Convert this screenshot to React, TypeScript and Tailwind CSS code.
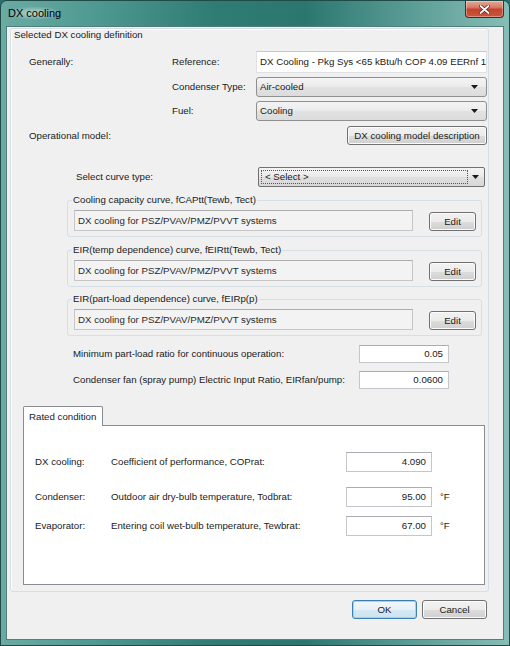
import React from 'react';

const Arrow = () => (
  <svg width="7" height="4" viewBox="0 0 7 4">
    <path d="M0 0h7L3.5 4z" fill="#1a1a1a" />
  </svg>
);

const Combo = ({ value }: { value: string }) => (
  <div className="flex h-[20px] w-[231px] items-center justify-between rounded-[3px] border border-[#8e8f8f] bg-[linear-gradient(#f4f4f4,#ebebeb_50%,#e2e2e2_51%,#dcdcdc)] pl-[3px] pr-[8px]">
    <span>{value}</span>
    <Arrow />
  </div>
);

const VistaButton = ({ children, className = '' }: { children: React.ReactNode; className?: string }) => (
  <button
    className={`flex items-center justify-center rounded-[3px] border border-[#707070] bg-[linear-gradient(#f2f2f2,#ebebeb_50%,#dddddd_51%,#cfcfcf)] shadow-[inset_0_0_0_1px_#fbfbfb] text-[#1a1a1a] ${className}`}
  >
    {children}
  </button>
);

const NumField = ({ value, className = '' }: { value: string; className?: string }) => (
  <div className={`flex items-center justify-end border border-[#c3c6cc] border-t-[#a9acb3] bg-white pr-[5px] ${className}`}>
    {value}
  </div>
);

const CurveGroup = ({ title, className = '' }: { title: string; className?: string }) => (
  <fieldset className={`ml-[56px] w-[415px] rounded-[3px] border border-[#d5dfe5] pb-[5px] pt-[4px] ${className}`}>
    <legend className="ml-[4px] px-[1px] leading-[12px]">{title}</legend>
    <div className="flex items-end pl-[6px]">
      <div className="flex h-[21px] w-[339px] items-center border border-[#c6c6c6] border-t-[#adadad] bg-[#f3f3f3] pl-[3px] text-[#2a2a2a]">
        DX cooling for PSZ/PVAV/PMZ/PVVT systems
      </div>
      <VistaButton className="ml-[16px] h-[19px] w-[47px]">Edit</VistaButton>
    </div>
  </fieldset>
);

export default function App() {
  return (
    <div className="h-[646px] w-[510px] bg-[#2a6f69]">
      <div className="flex h-[646px] w-[510px] flex-col rounded-t-[7px] border border-[#1f4a46] bg-[linear-gradient(90deg,#6aaba3_0%,#4f9a92_18%,#2f7c75_42%,#2b7770_60%,#5d9f98_82%,#86bdb6_100%)] px-[5px] pb-[5px] font-['Liberation_Sans',Arial,sans-serif] text-[9.7px] leading-[12px] text-[#1a1a1a]">
        {/* title bar */}
        <div className="flex h-[25px] items-start justify-between pl-[1px] pr-[0px]">
          <span className="mt-[5px] rounded-full bg-[radial-gradient(closest-side,rgba(255,255,255,0.55),rgba(255,255,255,0))] px-[1px] text-[11px] leading-[14px] text-black">
            DX cooling
          </span>
          <div className="-mt-[0px] flex h-[17px] w-[39px] items-center justify-center rounded-b-[4px] border border-t-0 border-[#5e2118] bg-[linear-gradient(#e7a797,#d77a66_40%,#c2442c_52%,#c9573e)] shadow-[inset_0_0_0_1px_rgba(255,255,255,0.35)]">
            <svg width="11" height="9" viewBox="0 0 11 9">
              <path d="M1.5 1l8 7M9.5 1l-8 7" stroke="#5a1c12" strokeWidth="3.2" strokeLinecap="round" />
              <path d="M1.5 1l8 7M9.5 1l-8 7" stroke="#fff" strokeWidth="1.8" strokeLinecap="round" />
            </svg>
          </div>
        </div>

        {/* client area */}
        <div className="flex flex-1 flex-col border border-[#527f7b] bg-[#f0f0f0]">
          <div className="ml-[3px] mt-[1px] flex w-[479px] flex-col rounded-[3px] border border-[#d5dfe5] pb-[6px] shadow-[inset_1px_1px_0_#fff]">
            <div className="ml-[3px] h-[12px]">Selected DX cooling definition</div>

            <div className="mt-[10px] flex h-[22px] items-center pl-[18px]">
              <span className="w-[143px]">Generally:</span>
              <span className="w-[84px]">Reference:</span>
              <div className="flex h-[22px] w-[231px] items-center overflow-hidden whitespace-nowrap border border-[#dfe1e5] border-t-[#c5c8cf] bg-white pl-[3px]">
                DX Cooling - Pkg Sys &lt;65 kBtu/h COP 4.09 EERnf 13
              </div>
            </div>

            <div className="mt-[4px] flex h-[20px] items-center pl-[161px]">
              <span className="w-[84px]">Condenser Type:</span>
              <Combo value="Air-cooled" />
            </div>

            <div className="mt-[4px] flex h-[20px] items-center pl-[161px]">
              <span className="w-[84px]">Fuel:</span>
              <Combo value="Cooling" />
            </div>

            <div className="mt-[5px] flex h-[19px] items-center justify-between pl-[18px] pr-[1px]">
              <span>Operational model:</span>
              <VistaButton className="h-[19px] w-[140px]">DX cooling model description</VistaButton>
            </div>

            <div className="mt-[22px] flex h-[20px] items-center pl-[65px]">
              <span className="w-[182px]">Select curve type:</span>
              <div className="flex h-[20px] w-[227px] items-center rounded-[2px] border border-[#707070] bg-[linear-gradient(#f4f4f4,#e9e9e9_50%,#dfdfdf_51%,#d8d8d8)] p-[2px]">
                <div className="flex h-[14px] w-[207px] items-center border border-dotted border-[#555] pl-[3px]">&lt; Select &gt;</div>
                <div className="flex flex-1 justify-center">
                  <Arrow />
                </div>
              </div>
            </div>

            <CurveGroup className="mt-[7px]" title="Cooling capacity curve, fCAPtt(Tewb, Tect)" />
            <CurveGroup className="mt-[7px]" title="EIR(temp dependence) curve, fEIRtt(Tewb, Tect)" />
            <CurveGroup className="mt-[6px]" title="EIR(part-load dependence) curve, fEIRp(p)" />

            <div className="mt-[9px] flex h-[18px] items-center pl-[62px]">
              <span className="w-[286px]">Minimum part-load ratio for continuous operation:</span>
              <NumField value="0.05" className="h-[18px] w-[90px]" />
            </div>
            <div className="mt-[8px] flex h-[18px] items-center pl-[62px]">
              <span className="w-[286px]">Condenser fan (spray pump) Electric Input Ratio, EIRfan/pump:</span>
              <NumField value="0.0600" className="h-[18px] w-[90px]" />
            </div>

            {/* tab */}
            <div className="ml-[12px] mt-[17px] flex flex-col">
              <div className="relative z-10 -mb-px flex h-[20px] w-[80px] items-center rounded-t-[2px] border border-b-0 border-[#898c95] bg-white pl-[5px]">
                Rated condition
              </div>
              <div className="flex h-[160px] w-[462px] flex-col border border-[#898c95] bg-white pl-[11px]">
                <div className="mt-[26px] flex h-[20px] items-center">
                  <span className="w-[76px]">DX cooling:</span>
                  <span className="w-[235px]">Coefficient of performance, COPrat:</span>
                  <NumField value="4.090" className="h-[20px] w-[86px]" />
                </div>
                <div className="mt-[15px] flex h-[20px] items-center">
                  <span className="w-[76px]">Condenser:</span>
                  <span className="w-[235px]">Outdoor air dry-bulb temperature, Todbrat:</span>
                  <NumField value="95.00" className="h-[20px] w-[86px]" />
                  <span className="ml-[8px]">°F</span>
                </div>
                <div className="mt-[9px] flex h-[20px] items-center">
                  <span className="w-[76px]">Evaporator:</span>
                  <span className="w-[235px]">Entering coil wet-bulb temperature, Tewbrat:</span>
                  <NumField value="67.00" className="h-[20px] w-[86px]" />
                  <span className="ml-[8px]">°F</span>
                </div>
              </div>
            </div>
          </div>

          <div className="mt-[8px] flex justify-end gap-[5px] pr-[16px]">
            <button className="flex h-[19px] w-[65px] items-center justify-center rounded-[3px] border border-[#3c7fb1] bg-[linear-gradient(#f2f8fc,#e6f1f8_50%,#d6e8f4_51%,#cde3f1)] shadow-[inset_0_0_0_1px_#9fd4f2] text-[#1a1a1a]">
              OK
            </button>
            <VistaButton className="h-[19px] w-[65px]">Cancel</VistaButton>
          </div>
        </div>
      </div>
    </div>
  );
}
